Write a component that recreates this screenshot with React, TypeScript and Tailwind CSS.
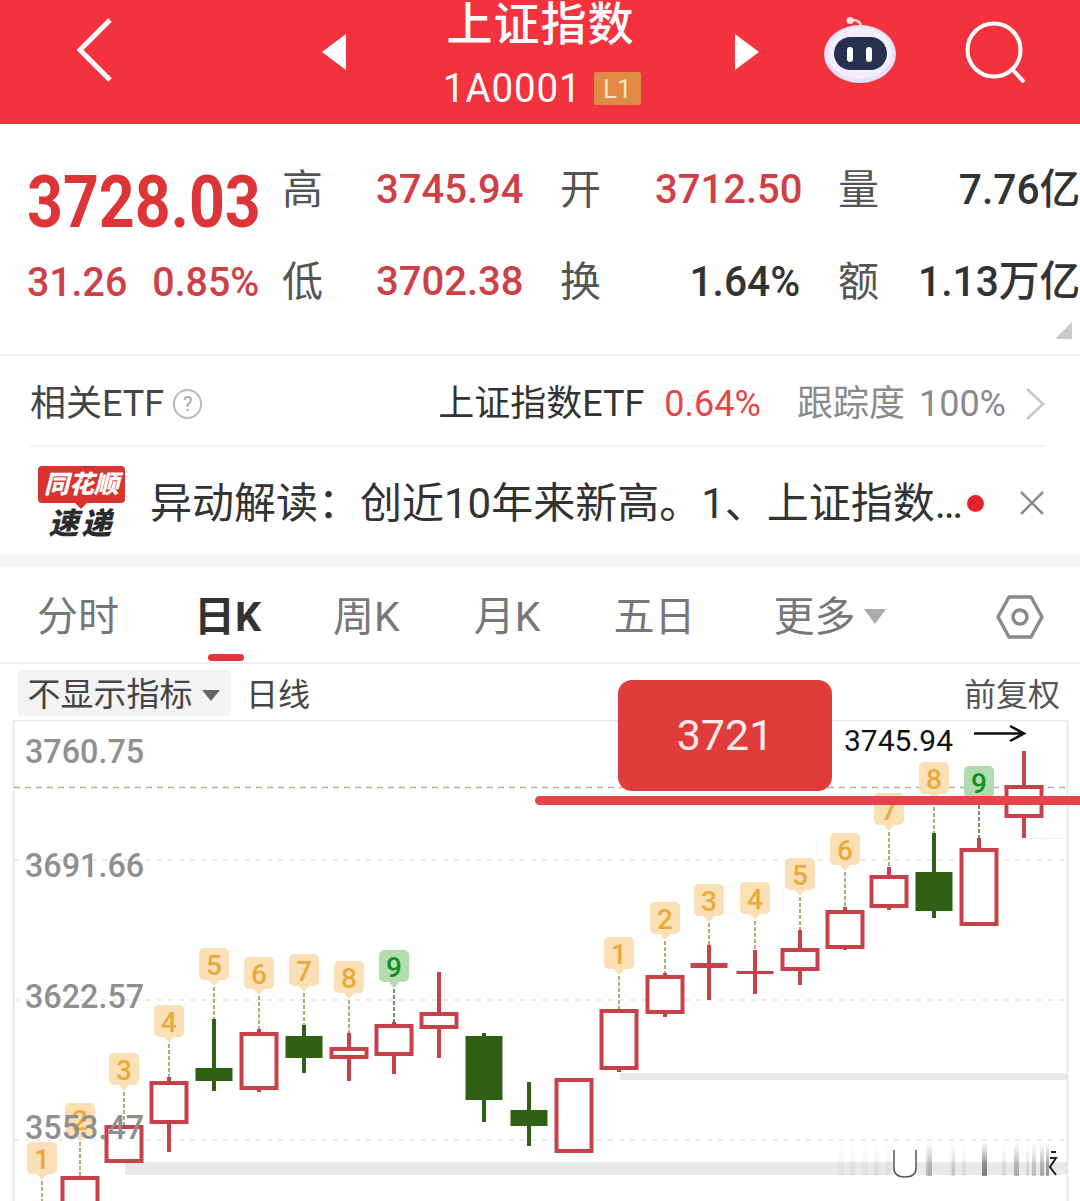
import React from 'react';

const FONT = "font-['Roboto','Noto_Sans_CJK_SC',sans-serif]";

type Candle = {
  x: number;
  top: number;
  bottom: number;
  high: number;
  low: number;
  green?: boolean;
  pin?: { n: number; top: number; nine?: boolean };
};

const candles: Candle[] = [
  { x: 42, top: 1230, bottom: 1240, high: 1230, low: 1240, pin: { n: 1, top: 1142 } },
  { x: 80, top: 1178, bottom: 1240, high: 1176, low: 1240, pin: { n: 2, top: 1103 } },
  { x: 124, top: 1127, bottom: 1161, high: 1126, low: 1161, pin: { n: 3, top: 1053 } },
  { x: 169, top: 1083, bottom: 1122, high: 1077, low: 1152, pin: { n: 4, top: 1005 } },
  { x: 214, top: 1068, bottom: 1081, high: 1019, low: 1091, green: true, pin: { n: 5, top: 948 } },
  { x: 259, top: 1034, bottom: 1088, high: 1029, low: 1092, pin: { n: 6, top: 957 } },
  { x: 304, top: 1036, bottom: 1058, high: 1025, low: 1073, green: true, pin: { n: 7, top: 954 } },
  { x: 349, top: 1049, bottom: 1057, high: 1033, low: 1081, pin: { n: 8, top: 961 } },
  { x: 394, top: 1026, bottom: 1054, high: 1022, low: 1074, pin: { n: 9, top: 950, nine: true } },
  { x: 439, top: 1014, bottom: 1027, high: 972, low: 1058 },
  { x: 484, top: 1036, bottom: 1100, high: 1033, low: 1122, green: true },
  { x: 529, top: 1110, bottom: 1126, high: 1082, low: 1146, green: true },
  { x: 574, top: 1080, bottom: 1151, high: 1080, low: 1153 },
  { x: 619, top: 1011, bottom: 1068, high: 1011, low: 1072, pin: { n: 1, top: 937 } },
  { x: 665, top: 977, bottom: 1012, high: 973, low: 1017, pin: { n: 2, top: 902 } },
  { x: 709, top: 963, bottom: 968, high: 945, low: 1000, pin: { n: 3, top: 884 } },
  { x: 755, top: 971, bottom: 974, high: 950, low: 994, pin: { n: 4, top: 882 } },
  { x: 800, top: 950, bottom: 969, high: 930, low: 985, pin: { n: 5, top: 858 } },
  { x: 845, top: 912, bottom: 947, high: 907, low: 950, pin: { n: 6, top: 833 } },
  { x: 889, top: 877, bottom: 906, high: 867, low: 910, pin: { n: 7, top: 793 } },
  { x: 934, top: 872, bottom: 911, high: 833, low: 918, green: true, pin: { n: 8, top: 762 } },
  { x: 979, top: 850, bottom: 924, high: 838, low: 926, pin: { n: 9, top: 766, nine: true } },
  { x: 1024, top: 787, bottom: 816, high: 751, low: 838 },
];

const streaks = [
  [838, 6, 0.05], [850, 5, 0.06], [862, 6, 0.05], [874, 5, 0.07], [885, 5, 0.05],
  [928, 4, 0.12], [926, 6, 0.25], [950, 5, 0.08], [962, 4, 0.08], [952, 3, 0.12],
  [982, 5, 0.6], [1002, 4, 0.1], [1014, 5, 0.35], [1032, 4, 0.25], [1040, 4, 0.35],
  [1046, 3, 0.45], [1026, 3, 0.12],
];

function Chart() {
  const red = '#c8414a';
  const green = '#2f6114';
  return (
    <svg viewBox="0 720 1080 481" className="absolute inset-0 h-full w-full">
      <defs>
        <linearGradient id="streak" x1="0" y1="0" x2="0" y2="1">
          <stop offset="0" stopColor="#333333" stopOpacity="0" />
          <stop offset="0.6" stopColor="#333333" stopOpacity="0.8" />
          <stop offset="1" stopColor="#333333" stopOpacity="1" />
        </linearGradient>
      </defs>
      <rect x="13.5" y="720.5" width="1054" height="490" fill="none" stroke="#e9e9e9" strokeWidth="2" />
      <line x1="1027" y1="838.5" x2="1067" y2="838.5" stroke="#eeeeee" />
      <line x1="14" y1="787.5" x2="1067" y2="787.5" stroke="#b9ae9a" strokeWidth="1.5" strokeDasharray="6 5" />
      {[860, 1000, 1140].map((y) => (
        <line key={y} x1="14" y1={y} x2="1067" y2={y} stroke="#e6e6e6" strokeWidth="1.5" strokeDasharray="5 6" />
      ))}
      <rect x="620" y="1073" width="447" height="7" fill="#e9e9e9" />
      <rect x="125" y="1162" width="942" height="13" fill="#e9e9e9" />

      {streaks.map(([x, w, o], i) => (
        <rect key={i} x={x} y="1142" width={w} height="34" fill="url(#streak)" opacity={o} />
      ))}
      <path d="M894 1150 V1168 Q894 1177 905 1177 Q916 1177 916 1168 V1150" fill="#ffffff" stroke="#555555" strokeWidth="1.5" />
      <path d="M1051 1152 h5 M1050 1158 h6 l-6 9 l6 8" fill="none" stroke="#222222" strokeWidth="2" />

      {candles.map((c, i) => {
        const color = c.green ? green : red;
        const thin = c.bottom - c.top < 6;
        return (
          <g key={i}>
            {c.pin && (
              <g>
                <line x1={c.x} y1={c.pin.top + 39} x2={c.x} y2={c.high} stroke={c.pin.nine ? '#4d6b3d' : '#a08a55'} strokeWidth="1.5" strokeDasharray="4 2" />
                <path
                  d={`M${c.x - 10} ${c.pin.top} h20 a5 5 0 0 1 5 5 v22 a5 5 0 0 1 -5 5 h-5 l-5 6 l-5 -6 h-5 a5 5 0 0 1 -5 -5 v-22 a5 5 0 0 1 5 -5z`}
                  fill={c.pin.nine ? '#b3dcae' : '#fbe0b6'}
                />
                <text
                  x={c.x}
                  y={c.pin.top + 27}
                  textAnchor="middle"
                  fontSize="28"
                  fontFamily="Roboto, sans-serif"
                  fontWeight="500"
                  fill={c.pin.nine ? '#12911e' : '#eba93a'}
                >
                  {c.pin.n}
                </text>
              </g>
            )}
            <line x1={c.x} y1={c.high} x2={c.x} y2={c.low} stroke={color} strokeWidth="4" />
            {c.green || thin ? (
              <rect x={c.x - 18.5} y={c.top} width="37" height={c.bottom - c.top} fill={color} />
            ) : (
              <rect x={c.x - 17.5} y={c.top} width="35" height={c.bottom - c.top} fill="#ffffff" stroke={red} strokeWidth="4" />
            )}
          </g>
        );
      })}
      <path d="M974 733.5 H1024 M1010 726 L1024 733.5 L1010 741" fill="none" stroke="#111111" strokeWidth="2.5" />
    </svg>
  );
}

function AxisLabel({ top, children }: { top: number; children: React.ReactNode }) {
  return (
    <span className="absolute left-[25px] text-[34px] leading-[40px] font-medium text-[#8f8f8f] scale-x-[0.95] origin-left" style={{ top }}>
      {children}
    </span>
  );
}

function Robot() {
  return (
    <svg width="74" height="70" viewBox="0 0 74 70">
      <path d="M38 10 C38 5 34 3 29 3" fill="none" stroke="#f3dada" strokeWidth="2.5" />
      <circle cx="27" cy="3.5" r="3.5" fill="#f7e2df" />
      <ellipse cx="37" cy="37" rx="36" ry="29" fill="#e4e2fb" />
      <ellipse cx="37" cy="36" rx="32" ry="26" fill="#f4eefa" />
      <rect x="11" y="20" width="53" height="33" rx="16.5" fill="#27304f" />
      <rect x="24" y="30" width="6" height="15" rx="3" fill="#ffffff" />
      <rect x="43" y="30" width="6" height="15" rx="3" fill="#ffffff" />
    </svg>
  );
}

function Header() {
  return (
    <header className="flex h-[124px] items-center bg-[#f2323d] pb-[20px] text-white">
      <svg width="36" height="64" viewBox="0 0 36 64" className="ml-[77px] -mt-[4px]">
        <path d="M33 2 L3 32 L33 62" fill="none" stroke="#ffffff" strokeWidth="5" />
      </svg>
      <svg width="24" height="36" viewBox="0 0 24 36" className="ml-[209px]">
        <path d="M24 0 V36 L0 18z" fill="#ffffff" />
      </svg>
      <div className="flex w-[389px] flex-col items-center mt-[8px]">
        <div className="text-[46px] leading-[44px] font-medium tracking-[1px]">上证指数</div>
        <div className="mt-[21px] flex items-center gap-[9px]">
          <span className="text-[40px] leading-[44px] tracking-[1px] scale-x-[0.96]">1A0001</span>
          <span className="flex h-[33px] w-[47px] items-center justify-center rounded-[2px] bg-[#e08a45] text-[26px] leading-none text-[#fbe3c4]">L1</span>
        </div>
      </div>
      <svg width="24" height="36" viewBox="0 0 24 36">
        <path d="M0 0 V36 L24 18z" fill="#ffffff" />
      </svg>
      <div className="ml-[64px]">
        <Robot />
      </div>
      <svg width="62" height="62" viewBox="0 0 62 62" className="ml-[68px]">
        <circle cx="29" cy="29" r="26.5" fill="none" stroke="#ffffff" strokeWidth="4" />
        <path d="M47 48 L59 61" stroke="#ffffff" strokeWidth="4" />
      </svg>
    </header>
  );
}

function Quote() {
  const label = 'text-[41px] leading-[50px] text-[#555555]';
  const up = 'text-[40px] leading-[50px] font-medium text-[#cf3f46] whitespace-nowrap';
  const dark = 'justify-self-end text-[42px] leading-[50px] font-medium text-[#333333] whitespace-nowrap scale-x-[0.97] origin-right';
  return (
    <section className="relative h-[232px] border-b-2 border-[#f3f3f3]">
      <div className="grid grid-cols-[282px_94px_184px_95px_183px_100px_142px] grid-rows-[92px_50px] pt-[41px]">
        <div className="pl-[31px] mt-[2px] text-[72px] leading-[72px] font-bold text-[#dc3538] whitespace-nowrap scale-x-[0.87] origin-left">3728.03</div>
        <div className={label}>高</div>
        <div className={up}>3745.94</div>
        <div className={label}>开</div>
        <div className={up}>3712.50</div>
        <div className={label}>量</div>
        <div className={dark}>7.76亿</div>

        <div className="flex gap-[26px] pl-[28px] text-[41px] leading-[50px] font-medium text-[#cf3f46] scale-x-[0.96] origin-left whitespace-nowrap">
          <span>31.26</span>
          <span>0.85%</span>
        </div>
        <div className={label}>低</div>
        <div className={up}>3702.38</div>
        <div className={label}>换</div>
        <div className={`${dark} mr-[38px]`}>1.64%</div>
        <div className={label}>额</div>
        <div className={dark}>1.13万亿</div>
      </div>
      <div className="absolute right-[8px] bottom-[15px] h-0 w-0 border-b-[17px] border-l-[17px] border-b-[#c9c9c9] border-l-transparent" />
    </section>
  );
}

function EtfRow() {
  return (
    <div className="mr-[35px] ml-[30px] flex h-[91px] items-center border-b-2 border-[#f3f3f3] pt-[7px] text-[36px] whitespace-nowrap">
      <span className="text-[#444444]">相关ETF</span>
      <span className="ml-[9px] flex h-[30px] w-[30px] items-center justify-center rounded-full border-2 border-[#bcbcbc] text-[20px] text-[#a5a5a5]">?</span>
      <span className="ml-[236px] text-[#333333]">上证指数ETF</span>
      <span className="ml-[20px] text-[#e6454b]">0.64%</span>
      <span className="ml-[36px] text-[#8a8a8a]">跟踪度</span>
      <span className="ml-[14px] text-[#8a8a8a]">100%</span>
      <svg width="20" height="34" viewBox="0 0 20 34" className="ml-[19px] shrink-0">
        <path d="M2 2 L18 17 L2 32" fill="none" stroke="#c6c6c6" strokeWidth="2.5" />
      </svg>
    </div>
  );
}

function NewsRow() {
  return (
    <div className="flex h-[108px] items-center pt-[4px] whitespace-nowrap">
      <div className="ml-[38px] flex w-[87px] flex-col items-center -mt-[2px]">
        <div className="relative flex h-[37px] w-[87px] items-center justify-center rounded-[4px] bg-[#d8332f] text-[25px] leading-none font-black italic text-white">
          同花顺
          <span className="absolute -bottom-[6px] left-[36px] h-0 w-0 border-x-[7px] border-t-[7px] border-x-transparent border-t-[#d8332f]" />
        </div>
        <div className="mt-[6px] text-[30px] leading-[30px] font-black italic tracking-[3px] text-[#2b2b2b]">速递</div>
      </div>
      <span className="ml-[25px] w-[812px] text-[42px] text-[#333333]">异动解读：创近10年来新高。1、上证指数…</span>
      <span className="ml-[5px] h-[17px] w-[17px] rounded-full bg-[#e4222b]" />
      <svg width="26" height="26" viewBox="0 0 26 26" className="ml-[35px]">
        <path d="M2 2 L24 24 M24 2 L2 24" stroke="#8e8e8e" strokeWidth="2.5" />
      </svg>
    </div>
  );
}

function Tabs() {
  const tab = 'text-[41px] leading-[48px] text-[#777777]';
  return (
    <div className="flex h-[97px] items-center border-b-2 border-[#f1f1f1] pt-[4px] whitespace-nowrap">
      <span className={`${tab} ml-[37px]`}>分时</span>
      <span className="relative ml-[75px] text-[41px] leading-[48px] font-bold text-[#333333]">
        日K
        <span className="absolute -bottom-[20px] left-[14px] h-[7px] w-[36px] rounded-full bg-[#e6343c]" />
      </span>
      <span className={`${tab} ml-[72px]`}>周K</span>
      <span className={`${tab} ml-[74px]`}>月K</span>
      <span className={`${tab} ml-[73px]`}>五日</span>
      <span className={`${tab} ml-[78px]`}>更多</span>
      <span className="ml-[8px] h-0 w-0 border-x-[11px] border-t-[15px] border-x-transparent border-t-[#ababab]" />
      <svg width="48" height="48" viewBox="0 0 48 48" className="ml-[110px]">
        <path d="M13 4 H35 L46 24 L35 44 H13 L2 24z" fill="none" stroke="#8a8a8a" strokeWidth="3.5" strokeLinejoin="round" />
        <circle cx="24" cy="24" r="7" fill="none" stroke="#8a8a8a" strokeWidth="3.5" />
      </svg>
    </div>
  );
}

function SubBar() {
  return (
    <div className="flex h-[56px] items-center justify-between pt-[2px] pr-[20px] pl-[18px] whitespace-nowrap">
      <div className="flex items-center">
        <div className="flex h-[46px] w-[213px] items-center justify-center gap-[9px] rounded-[4px] bg-[#f3f3f3] pt-[4px] pr-[2px] text-[33px] text-[#444444]">
          不显示指标
          <span className="h-0 w-0 border-x-[9px] border-t-[11px] border-x-transparent border-t-[#666666]" />
        </div>
        <span className="ml-[15px] pt-[4px] text-[32px] text-[#444444]">日线</span>
      </div>
      <span className="pt-[4px] text-[32px] text-[#555555]">前复权</span>
    </div>
  );
}

export default function App() {
  return (
    <div className={`${FONT} flex h-[1201px] w-[1080px] flex-col overflow-hidden bg-white`}>
      <Header />
      <Quote />
      <EtfRow />
      <NewsRow />
      <div className="h-[12px] bg-[#f5f5f5]" />
      <Tabs />
      <SubBar />
      <div className="relative flex-1">
        <Chart />
        <AxisLabel top={11}>3760.75</AxisLabel>
        <AxisLabel top={125}>3691.66</AxisLabel>
        <AxisLabel top={256}>3622.57</AxisLabel>
        <AxisLabel top={387}>3553.47</AxisLabel>
        <span className="absolute top-[3px] left-[844px] text-[30px] leading-[36px] text-[#111111]">3745.94</span>
        <div className="absolute -top-[40px] left-[618px] flex h-[111px] w-[214px] items-center justify-center rounded-[14px] bg-[#e03c3c] text-[43px] text-[#fbe9e9]">
          3721
        </div>
        <div className="absolute top-[76px] left-[535px] h-[9px] w-[560px] rounded-full bg-[#e7434a]" />
      </div>
    </div>
  );
}
